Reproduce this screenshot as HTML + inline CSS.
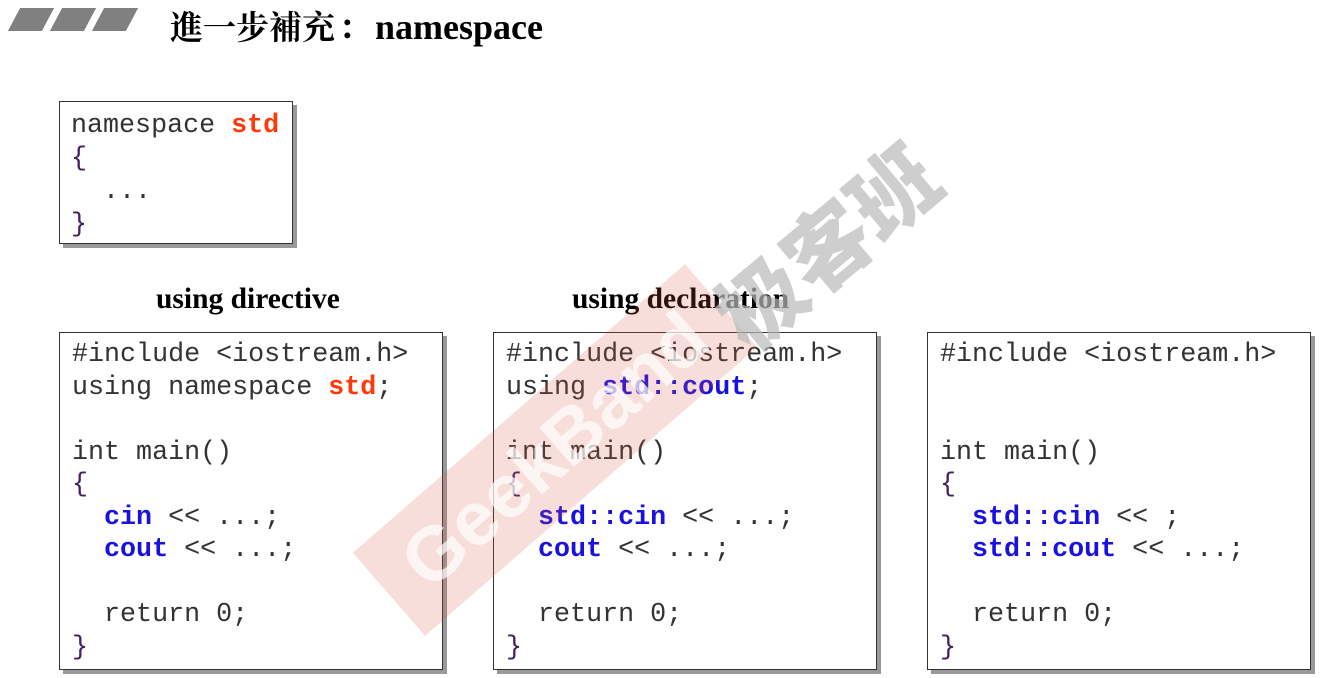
<!DOCTYPE html>
<html><head><meta charset="utf-8"><style>
html,body{margin:0;padding:0;background:#fff;}
body{width:1330px;height:678px;position:relative;overflow:hidden;font-family:"Liberation Serif","Noto Serif CJK SC",serif;}
.stripe{position:absolute;top:8px;width:34px;height:23px;background:#808080;transform:skewX(-28deg);}
.title{position:absolute;left:170px;top:2px;font-size:36px;color:#000;white-space:nowrap;}
.title .cjk{font-family:"Noto Serif CJK SC",serif;font-size:33px;font-weight:bold;}
.title .col{font-family:"Noto Serif CJK SC",serif;font-size:33px;font-weight:bold;display:inline-block;width:40px;text-align:center;}
.title b{font-family:"Liberation Serif",serif;}
.box{position:absolute;border:1.5px solid #333;background:#fff;box-shadow:4px 4px 0 #999;box-sizing:border-box;}
pre{margin:0;font-family:"Liberation Mono","Courier New",monospace;font-size:26.7px;line-height:32.5px;color:#333;}
.b{color:#1a10e0;font-weight:bold;}
.r{color:#ff3a0a;font-weight:bold;}
.p{color:#402060;}
.h{position:absolute;font-size:29.5px;font-weight:bold;top:283px;white-space:nowrap;}
.wm{position:absolute;left:335px;top:395px;width:440px;height:110px;background:rgba(215,90,75,0.2);transform:rotate(-41deg);transform-origin:center;color:rgba(255,255,255,0.7);font-family:"Liberation Sans",sans-serif;font-weight:bold;font-size:76px;line-height:110px;text-align:center;}
.wm2{position:absolute;left:695px;top:180px;font-family:"Noto Sans CJK SC",sans-serif;font-weight:900;font-size:86px;color:rgba(185,185,185,0.7);transform:rotate(-40deg);white-space:nowrap;}
</style></head><body>
<div class="stripe" style="left:14px"></div>
<div class="stripe" style="left:56px"></div>
<div class="stripe" style="left:98px"></div>
<div class="title"><span class="cjk">進一步補充</span><span class="col">：</span><b>namespace</b></div>

<div class="box" style="left:59px;top:101px;width:234px;height:143px;padding:8px 0 0 11px;">
<pre style="line-height:33px">namespace <span class="r">std</span>
<span class="p">{</span>
  ...
<span class="p">}</span></pre></div>

<div class="h" style="left:156px">using directive</div>
<div class="h" style="left:572px">using declaration</div>

<div class="box" style="left:59px;top:332px;width:384px;height:338px;padding:6px 0 0 12px;">
<pre>#include &lt;iostream.h&gt;
using namespace <span class="r">std</span>;

int main()
<span class="p">{</span>
  <span class="b">cin</span> &lt;&lt; ...;
  <span class="b">cout</span> &lt;&lt; ...;

  return 0;
<span class="p">}</span></pre></div>

<div class="box" style="left:493px;top:332px;width:384px;height:338px;padding:6px 0 0 12px;">
<pre>#include &lt;iostream.h&gt;
using <span class="b">std::cout</span>;

int main()
<span class="p">{</span>
  <span class="b">std::cin</span> &lt;&lt; ...;
  <span class="b">cout</span> &lt;&lt; ...;

  return 0;
<span class="p">}</span></pre></div>

<div class="box" style="left:927px;top:332px;width:384px;height:338px;padding:6px 0 0 12px;">
<pre>#include &lt;iostream.h&gt;


int main()
<span class="p">{</span>
  <span class="b">std::cin</span> &lt;&lt; ;
  <span class="b">std::cout</span> &lt;&lt; ...;

  return 0;
<span class="p">}</span></pre></div>

<div class="wm">GeekBand</div>
<div class="wm2">极客班</div>
</body></html>
